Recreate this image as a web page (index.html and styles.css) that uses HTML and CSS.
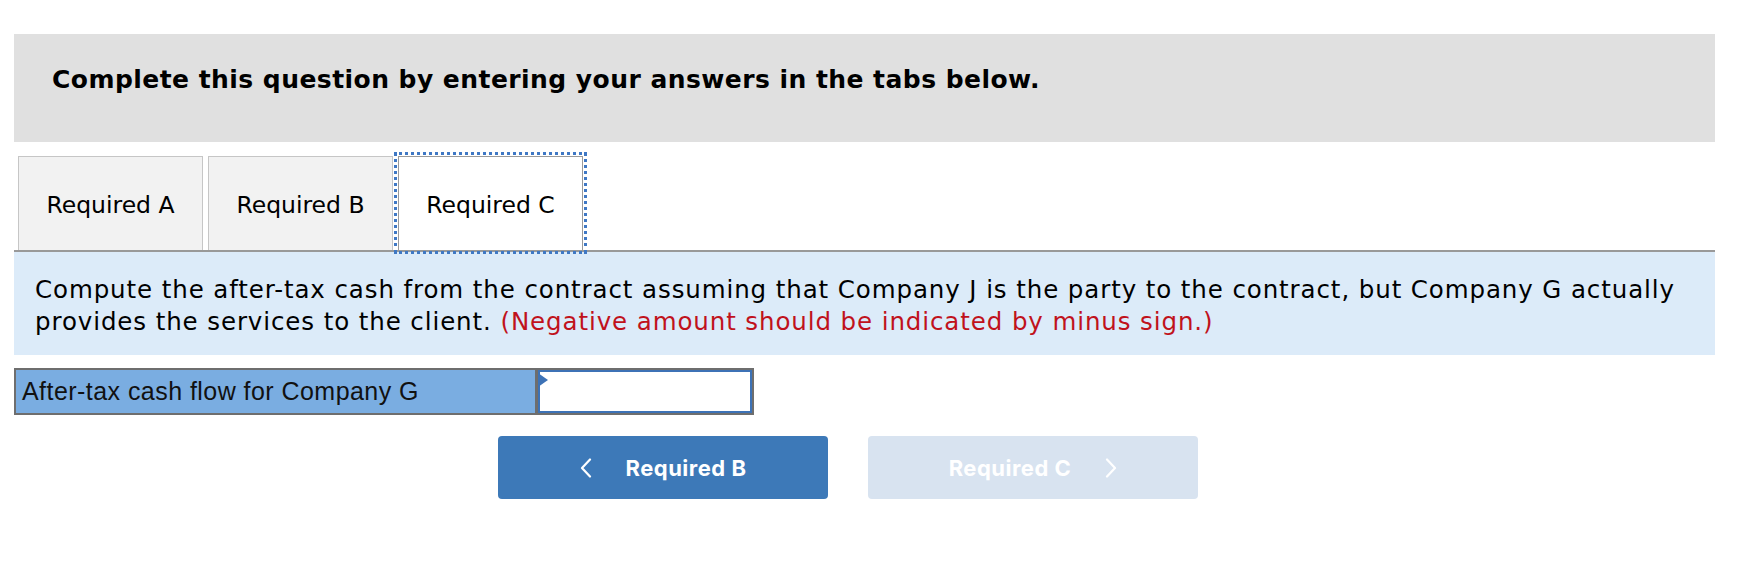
FILE: index.html
```html
<!DOCTYPE html>
<html lang="en">
<head>
<meta charset="utf-8">
<title>Required C</title>
<link rel="stylesheet" href="styles.css">
</head>
<body>
<div class="page">
  <div class="instructions">
    <h2 class="instructions-title">Complete this question by entering your answers in the tabs below.</h2>
  </div>

  <div class="tabs">
    <div class="tab">Required A</div>
    <div class="tab">Required B</div>
    <div class="tab tab-active">Required C</div>
  </div>

  <div class="prompt">
    <p class="prompt-line">Compute the after-tax cash from the contract assuming that Company J is the party to the contract, but Company G actually</p>
    <p class="prompt-line">provides the services to the client. <span class="prompt-note">(Negative amount should be indicated by minus sign.)</span></p>
  </div>

  <div class="answer-row">
    <div class="answer-label">After-tax cash flow for Company G</div>
    <div class="answer-cell">
      <span class="answer-marker"></span>
      <input class="answer-input" type="text" value="">
    </div>
  </div>

  <div class="nav">
    <button class="nav-btn nav-prev" type="button">
      <svg class="chev" width="12" height="20" viewBox="0 0 12 20"><path d="M10 1.5 L2 10 L10 18.5" fill="none" stroke="#ffffff" stroke-width="2.2" stroke-linecap="round" stroke-linejoin="round"/></svg>
      <span class="nav-text">Required B</span>
    </button>
    <button class="nav-btn nav-next" type="button">
      <span class="nav-text">Required C</span>
      <svg class="chev" width="12" height="20" viewBox="0 0 12 20"><path d="M2 1.5 L10 10 L2 18.5" fill="none" stroke="#ffffff" stroke-width="2.2" stroke-linecap="round" stroke-linejoin="round"/></svg>
    </button>
  </div>
</div>
</body>
</html>
```

FILE: styles.css
```css
html, body {
  margin: 0;
  padding: 0;
  background: #ffffff;
}

.page {
  width: 1701px;
  padding: 34px 0 0 14px;
  font-family: "DejaVu Sans", Verdana, sans-serif;
  color: #000000;
}

.instructions {
  background: #e0e0e0;
  height: 108px;
  box-sizing: border-box;
  padding: 31px 0 0 38px;
}

.instructions-title {
  margin: 0;
  font-size: 25px;
  font-weight: bold;
  line-height: 30px;
  letter-spacing: 0.45px;
  color: #000000;
}

.tabs {
  display: flex;
  gap: 5px;
  padding: 14px 0 0 4px;
  border-bottom: 2px solid #999999;
  height: 94px;
}

.tab {
  width: 185px;
  box-sizing: border-box;
  border: 1px solid #c6c6c6;
  border-bottom: none;
  background: #f2f2f2;
  display: flex;
  align-items: center;
  justify-content: center;
  font-size: 23.5px;
  padding-top: 2px;
}

.tab-active {
  background: #ffffff;
  border-color: #9a9a9a;
  outline: 3px dotted #3f78c4;
  outline-offset: 1px;
}

.prompt {
  background: #dcebf9;
  padding: 22px 20px 17px 21px;
  font-size: 24.5px;
  line-height: 32px;
  letter-spacing: 0.9px;
}

.prompt-line {
  margin: 0;
  white-space: nowrap;
}

.prompt-note {
  color: #c0121c;
}

.answer-row {
  display: flex;
  margin-top: 13px;
  width: fit-content;
  border: 2px solid #6e6e6e;
  height: 43px;
}

.answer-label {
  width: 513px;
  background: #7aade1;
  font-family: "Liberation Sans", Arial, sans-serif;
  font-size: 25px;
  letter-spacing: 0.45px;
  line-height: 43px;
  padding-left: 6px;
  color: #111111;
  white-space: nowrap;
}

.answer-cell {
  position: relative;
  width: 214px;
  border-left: 3px solid #6e6e6e;
  background: #ffffff;
  display: flex;
}

.answer-input {
  flex: 1;
  width: 0;
  min-width: 0;
  margin: 0;
  border: 2px solid #3d72b6;
  padding: 0 6px;
  font-size: 20px;
  font-family: "Liberation Sans", Arial, sans-serif;
  outline: none;
  background: #ffffff;
}

.answer-marker {
  position: absolute;
  left: 0;
  top: 3px;
  width: 0;
  height: 0;
  border-top: 7px solid transparent;
  border-bottom: 7px solid transparent;
  border-left: 10px solid #3d72b6;
}

.nav {
  display: flex;
  gap: 40px;
  margin: 21px 0 0 484px;
}

.nav-btn {
  width: 330px;
  height: 63px;
  border: none;
  border-radius: 4px;
  display: flex;
  align-items: center;
  justify-content: center;
  gap: 34px;
  color: #ffffff;
  font-family: Inter, "Noto Sans", sans-serif;
  font-weight: bold;
  font-size: 22px;
  padding: 0;
  cursor: pointer;
}

.nav-prev {
  background: #3d79b8;
}

.nav-next {
  background: #d8e3f0;
}

.chev {
  display: block;
}

.nav-text {
  display: block;
  letter-spacing: 0.5px;
}
```
